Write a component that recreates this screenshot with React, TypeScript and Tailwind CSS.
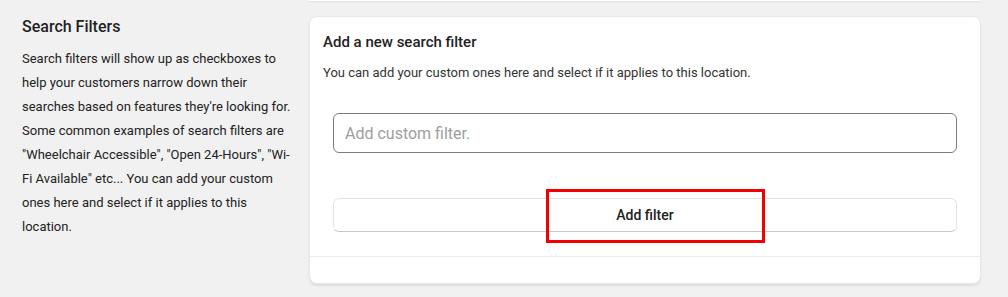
import React, { useState } from 'react';

const App: React.FC = () => {
  const [filter, setFilter] = useState('');

  return (
    <div className="w-[1008px] h-[297px] overflow-hidden bg-[#f1f1f1] text-[#212121] font-['Roboto','Liberation_Sans',sans-serif]">
      {/* Tail of the previous card */}
      <div className="ml-[309px] mr-[27px] h-[1px] bg-white rounded-b-lg shadow-[0_1px_2px_rgba(0,0,0,0.12)]" />

      <div className="flex pt-[15px] pl-[22px] pr-[27px]">
        {/* Description */}
        <div className="w-[272px] shrink-0">
          <h2 className="text-[16px] leading-[22px] font-medium text-[#1f1f1f] -mt-[15px] pt-[15px]">Search Filters</h2>
          <p className="mt-[9px] text-[13px] leading-[24px] text-[#222]">
            Search filters will show up as checkboxes to help your customers narrow down their searches based on features they're looking for. Some common examples of search filters are "Wheelchair Accessible", "Open 24-Hours", "Wi-Fi Available" etc... You can add your custom ones here and select if it applies to this location.
          </p>
        </div>

        {/* Card */}
        <div className="ml-[15px] flex-1 bg-white rounded-lg border border-[#e8e8e8] shadow-[0_2px_2px_rgba(0,0,0,0.08)] h-[268px] flex flex-col">
          <div className="px-[13px] pt-[15px]">
            <h3 className="text-[15px] leading-[20px] font-medium text-[#222]">Add a new search filter</h3>
            <p className="mt-[11px] text-[13px] leading-[20px] text-[#333]">
              You can add your custom ones here and select if it applies to this location.
            </p>
          </div>

          <div className="px-[23px] pt-[30px]">
            <input
              value={filter}
              onChange={(e) => setFilter(e.target.value)}
              placeholder="Add custom filter."
              className="w-full h-[40px] rounded-md border border-[#7d7d7d] px-[11px] text-[16px] text-[#222] placeholder-[#9e9e9e] outline-none"
            />

            <div className="relative mt-[45px]">
              <button className="w-full h-[34px] rounded-md border border-[#e3e3e3] border-b-[#c8c8c8] bg-white text-[14px] font-medium text-[#222]">
                Add filter
              </button>
              {/* Annotation highlight */}
              <div className="absolute left-[213px] top-[-9px] w-[219px] h-[54px] border-[3px] border-[#f00000] pointer-events-none" />
            </div>
          </div>

          <div className="mt-[24px] border-t border-[#ececec] flex-1" />
        </div>
      </div>
    </div>
  );
};

export default App;
